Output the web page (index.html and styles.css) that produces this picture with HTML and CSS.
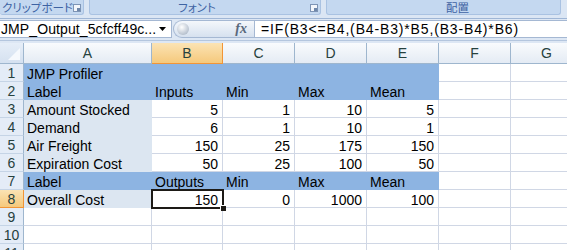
FILE: index.html
```html
<!DOCTYPE html>
<html lang="ja">
<head>
    <meta charset="UTF-8">
    <title>JMP Profiler - Excel</title>
    <link rel="stylesheet" href="styles.css">
</head>
<body>
    <div class="ribbon">
        <div class="group group-clip">
            <span class="group-label">クリップボード</span>
            <span class="launcher"></span>
        </div>
        <div class="group group-font">
            <span class="group-label">フォント</span>
            <span class="launcher"></span>
        </div>
        <div class="group group-align">
            <span class="group-label">配置</span>
        </div>
    </div>

    <div class="formula-bar">
        <div class="name-box">
            <span class="name">JMP_Output_5cfcff49c...</span>
            <svg class="dropdown" width="7" height="4" viewBox="0 0 7 4"><path d="M0 0h7L3.5 4z" fill="#000"/></svg>
        </div>
        <div class="fx-pill">
            <span class="knob"></span>
            <span class="fx">fx</span>
        </div>
        <div class="formula">=IF(B3&lt;=B4,(B4-B3)*B5,(B3-B4)*B6)</div>
    </div>

    <div class="sheet">
        <div class="corner"></div>
        <div class="col-head">A</div>
        <div class="col-head active">B</div>
        <div class="col-head">C</div>
        <div class="col-head">D</div>
        <div class="col-head">E</div>
        <div class="col-head">F</div>
        <div class="col-head">G</div>

        <div class="row-head">1</div>
        <div class="cell hd">JMP Profiler</div>
        <div class="cell hd"></div>
        <div class="cell hd"></div>
        <div class="cell hd"></div>
        <div class="cell hd"></div>
        <div class="cell"></div>
        <div class="cell"></div>

        <div class="row-head">2</div>
        <div class="cell hd">Label</div>
        <div class="cell hd">Inputs</div>
        <div class="cell hd">Min</div>
        <div class="cell hd">Max</div>
        <div class="cell hd">Mean</div>
        <div class="cell"></div>
        <div class="cell"></div>

        <div class="row-head">3</div>
        <div class="cell lt">Amount Stocked</div>
        <div class="cell num">5</div>
        <div class="cell num">1</div>
        <div class="cell num">10</div>
        <div class="cell num">5</div>
        <div class="cell"></div>
        <div class="cell"></div>

        <div class="row-head">4</div>
        <div class="cell lt">Demand</div>
        <div class="cell num">6</div>
        <div class="cell num">1</div>
        <div class="cell num">10</div>
        <div class="cell num">1</div>
        <div class="cell"></div>
        <div class="cell"></div>

        <div class="row-head">5</div>
        <div class="cell lt">Air Freight</div>
        <div class="cell num">150</div>
        <div class="cell num">25</div>
        <div class="cell num">175</div>
        <div class="cell num">150</div>
        <div class="cell"></div>
        <div class="cell"></div>

        <div class="row-head">6</div>
        <div class="cell lt">Expiration Cost</div>
        <div class="cell num">50</div>
        <div class="cell num">25</div>
        <div class="cell num">100</div>
        <div class="cell num">50</div>
        <div class="cell"></div>
        <div class="cell"></div>

        <div class="row-head">7</div>
        <div class="cell hd">Label</div>
        <div class="cell hd">Outputs</div>
        <div class="cell hd">Min</div>
        <div class="cell hd">Max</div>
        <div class="cell hd">Mean</div>
        <div class="cell"></div>
        <div class="cell"></div>

        <div class="row-head active">8</div>
        <div class="cell lt">Overall Cost</div>
        <div class="cell num selected">150<span class="sel-box"></span><span class="fill-handle"></span></div>
        <div class="cell num">0</div>
        <div class="cell num">1000</div>
        <div class="cell num">100</div>
        <div class="cell"></div>
        <div class="cell"></div>

        <div class="row-head">9</div>
        <div class="cell"></div><div class="cell"></div><div class="cell"></div><div class="cell"></div><div class="cell"></div><div class="cell"></div><div class="cell"></div>

        <div class="row-head">10</div>
        <div class="cell"></div><div class="cell"></div><div class="cell"></div><div class="cell"></div><div class="cell"></div><div class="cell"></div><div class="cell"></div>

        <div class="row-head">11</div>
        <div class="cell"></div><div class="cell"></div><div class="cell"></div><div class="cell"></div><div class="cell"></div><div class="cell"></div><div class="cell"></div>
    </div>
</body>
</html>
```

FILE: styles.css
```css
body {
    margin: 0;
    width: 567px;
    height: 250px;
    overflow: hidden;
    background: #dde7f4;
    font-family: 'Liberation Sans', Arial, sans-serif;
}

/* ribbon group captions */
.ribbon {
    display: flex;
    gap: 5px;
    height: 15px;
    padding-bottom: 3px;
    border-bottom: 1px solid #9fb6d6;
    background: #dbe6f4;
}
.group {
    display: flex;
    align-items: center;
    padding-top: 1px;
    background: #c4d8f0;
    border: 1px solid #a9c2e2;
    border-top: none;
    border-radius: 0 0 3px 3px;
    position: relative;
}
.group-label {
    font-family: 'Noto Sans CJK JP', sans-serif;
    font-feature-settings: "palt";
    font-size: 11.5px;
    line-height: 13px;
    color: #3e63a3;
}
.group-clip {
    width: 84px;
    border-left: none;
    padding-left: 2px;
    box-sizing: border-box;
}
.group-font {
    width: 232px;
    justify-content: center;
    padding-right: 16px;
    box-sizing: border-box;
}
.group-align {
    width: 235px;
    justify-content: center;
    padding-left: 28px;
    box-sizing: border-box;
}
.launcher {
    position: absolute;
    right: 2px;
    top: 4px;
    width: 6px;
    height: 6px;
    border: 1px solid #7d94b5;
    background: #f3f6fb;
}
.launcher::after {
    content: "";
    position: absolute;
    right: 0;
    bottom: 0;
    width: 3px;
    height: 3px;
    background: #6f87aa;
}

/* formula bar */
.formula-bar {
    display: flex;
    height: 18px;
    padding: 1px 0 2px;
    border-bottom: 1px solid #b4c6de;
    margin-bottom: 2px;
}
.name-box {
    width: 172px;
    display: flex;
    align-items: center;
    background: #fff;
    border: 1px solid #a5b8d3;
    border-left: none;
    box-sizing: border-box;
}
.name {
    flex: 1;
    padding-left: 1px;
    font-size: 14px;
    letter-spacing: 0.1px;
    white-space: nowrap;
}
.dropdown {
    margin-right: 5px;
}
.fx-pill {
    width: 81px;
    display: flex;
    align-items: center;
    justify-content: space-between;
    margin-left: 1px;
    padding: 0 7px 0 3px;
    box-sizing: border-box;
    border: 1px solid #a5b8d3;
    border-right: none;
    border-radius: 9px 0 0 9px;
    background: linear-gradient(#f4f7fb, #d6e1ef);
}
.knob {
    width: 12px;
    height: 12px;
    border-radius: 50%;
    background: radial-gradient(circle at 40% 35%, #ffffff, #b9c3d0 70%, #97a4b6);
}
.fx {
    font-family: 'Liberation Serif', serif;
    font-style: italic;
    font-weight: bold;
    font-size: 14px;
    color: #59687c;
}
.formula {
    flex: 1;
    background: #fff;
    border: 1px solid #a5b8d3;
    border-right: none;
    padding-left: 6px;
    font-size: 14px;
    line-height: 16px;
    letter-spacing: 0.85px;
    white-space: nowrap;
}

/* worksheet grid */
.sheet {
    display: grid;
    grid-template-columns: 24px 128px 71px 72px 72px 72px 72px 72px;
    grid-template-rows: 21px;
    grid-auto-rows: 18px;
    background: #fff;
}
.corner {
    background: linear-gradient(#e6eef8, #d5e1f0);
    border-right: 1px solid #9eb6ce;
    border-bottom: 1px solid #9eb6ce;
    position: relative;
}
.corner::after {
    content: "";
    position: absolute;
    right: 3px;
    bottom: 3px;
    border-left: 12px solid transparent;
    border-bottom: 12px solid #f6f9fd;
}
.col-head {
    display: flex;
    align-items: center;
    justify-content: center;
    font-size: 14px;
    color: #27413e;
    background: linear-gradient(#f9fbfd, #e4ebf4);
    border-right: 1px solid #9eb6ce;
    border-bottom: 1px solid #9eb6ce;
}
.col-head.active {
    background: linear-gradient(#fbe3b4, #f5c97c);
    border-color: #f29536;
}
.row-head {
    display: flex;
    align-items: center;
    justify-content: center;
    font-size: 14px;
    color: #27413e;
    background: #e4ecf7;
    border-right: 1px solid #9eb6ce;
    border-bottom: 1px solid #c5d4e6;
}
.row-head.active {
    background: linear-gradient(#fbe3b4, #f5c97c);
    border-color: #f29536;
}
.cell {
    display: flex;
    align-items: flex-end;
    padding: 0 3px;
    font-size: 14px;
    line-height: 14px;
    white-space: nowrap;
    border-right: 1px solid #d0d7e5;
    border-bottom: 1px solid #d0d7e5;
}
.cell.num {
    justify-content: flex-end;
    padding-right: 4px;
}
.cell.hd {
    background: #8db4e2;
    border-color: #8db4e2;
}
.cell.lt {
    background: #dce6f1;
    border-color: #dce6f1;
}
.cell.selected {
    position: relative;
}
.sel-box {
    position: absolute;
    left: -1px;
    top: -1px;
    right: -2px;
    bottom: -2px;
    border: 2px solid #1d1a16;
}
.fill-handle {
    position: absolute;
    right: -4px;
    bottom: -4px;
    width: 5px;
    height: 5px;
    background: #1d1a16;
    border: 1px solid #fff;
    border-width: 1px 0 0 1px;
}
```
